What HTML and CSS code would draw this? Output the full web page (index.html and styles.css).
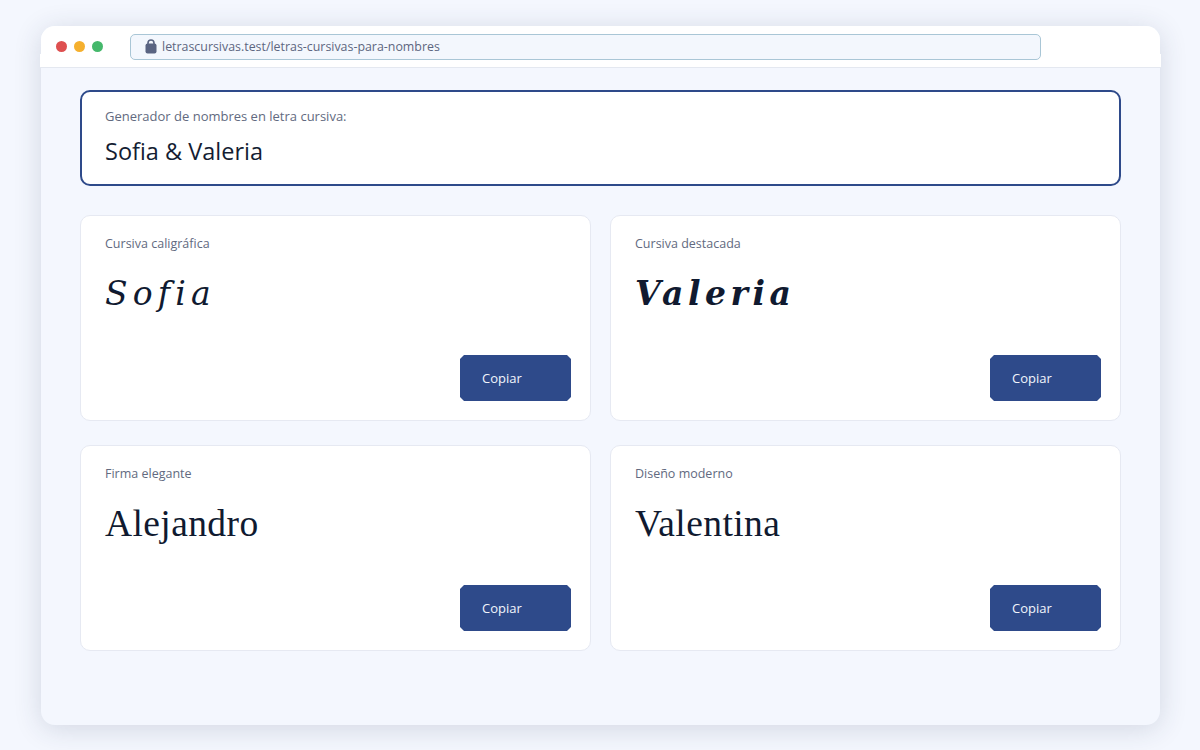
FILE: index.html
```html
<!DOCTYPE html>
<html lang="es">
<head>
    <meta charset="UTF-8">
    <meta name="viewport" content="width=device-width, initial-scale=1.0">
    <title>Letras cursivas para nombres</title>
    <link rel="stylesheet" href="styles.css">
</head>
<body>
    <div class="browser">
        <div class="browser-bar">
            <div class="dots">
                <span class="dot dot-red"></span>
                <span class="dot dot-yellow"></span>
                <span class="dot dot-green"></span>
            </div>
            <div class="address">
                <svg class="lock" width="12" height="15" viewBox="0 0 12 15">
                    <path d="M3 6V4a3 3 0 0 1 6 0v2" fill="none" stroke="#5a6482" stroke-width="1.6"/>
                    <rect x="0.5" y="4.5" width="11" height="10" rx="2" fill="#5a6482"/>
                </svg>
                <span>letrascursivas.test/letras-cursivas-para-nombres</span>
            </div>
        </div>

        <main class="content">
            <section class="name-input">
                <p class="label">Generador de nombres en letra cursiva:</p>
                <p class="typed">Sofia &amp; Valeria</p>
            </section>

            <section class="cards">
                <article class="card">
                    <p class="label-small">Cursiva caligráfica</p>
                    <p class="sample sample-script">Sofia</p>
                    <button class="copy">Copiar</button>
                </article>
                <article class="card">
                    <p class="label-small">Cursiva destacada</p>
                    <p class="sample sample-bold">Valeria</p>
                    <button class="copy">Copiar</button>
                </article>
                <article class="card">
                    <p class="label-small">Firma elegante</p>
                    <p class="sample sample-serif">Alejandro</p>
                    <button class="copy">Copiar</button>
                </article>
                <article class="card">
                    <p class="label-small">Diseño moderno</p>
                    <p class="sample sample-serif">Valentina</p>
                    <button class="copy">Copiar</button>
                </article>
            </section>
        </main>
    </div>
</body>
</html>
```

FILE: styles.css
```css
* { margin: 0; padding: 0; box-sizing: border-box; }
html, body { width: 100%; height: 100%; }
body {
    background: #f4f7fe;
    font-family: 'Open Sans', 'Noto Sans', sans-serif;
    color: #111b33;
    padding: 26px 40px 25px 41px;
    overflow: hidden;
}
.browser {
    width: 1119px;
    height: 699px;
    background: #f4f7fe;
    border-radius: 14px;
    box-shadow: 0 4px 28px rgba(40, 50, 80, 0.16);
}
.browser-bar {
    position: relative;
    height: 42px;
    background: #fff;
    border-radius: 14px 14px 0 0;
    display: flex;
    align-items: center;
    padding: 0 0 1px 15px;
}
/* lower part of the bar sticks out 1px past the window */
.browser-bar::before {
    content: "";
    position: absolute;
    left: -1px;
    right: -1px;
    bottom: 0;
    height: 13px;
    background: #fff;
    border-bottom: 1px solid #e4e8f0;
}
.dots { position: relative; display: flex; gap: 7px; width: 74px; }
.dot { width: 11px; height: 11px; border-radius: 50%; }
.dot-red { background: #de5050; }
.dot-yellow { background: #f5b02e; }
.dot-green { background: #45b86b; }
.address {
    position: relative;
    width: 911px;
    height: 26px;
    background: #f3f7fd;
    border: 1px solid #a9c6d6;
    border-radius: 5px;
    display: flex;
    align-items: center;
    gap: 5px;
    padding-left: 14px;
    font-size: 12.4px;
    color: #5d6680;
}
.lock { flex-shrink: 0; }
.content { padding: 22px 39px 0 39px; }
.name-input {
    height: 96px;
    background: #fff;
    border: 2px solid #2e4a8a;
    border-radius: 10px;
    padding: 15px 23px;
}
.label { font-size: 13px; line-height: 18px; color: #626a80; }
.typed { font-size: 23.5px; line-height: 32px; margin-top: 10px; color: #141d33; }
.cards {
    display: grid;
    grid-template-columns: 511px 511px;
    grid-auto-rows: 206px;
    column-gap: 19px;
    row-gap: 24px;
    margin-top: 29px;
}
.card {
    background: #fff;
    border: 1px solid #e6e9f2;
    border-radius: 10px;
    padding: 19px 19px 19px 24px;
    display: flex;
    flex-direction: column;
}
.label-small { font-size: 12.5px; line-height: 17px; color: #626a80; }
.sample {
    flex: 1;
    margin-top: 20px;
    color: #101a30;
    white-space: nowrap;
}
.sample-script {
    font-family: 'DejaVu Serif', serif;
    font-style: italic;
    font-size: 33px;
    line-height: 44px;
    letter-spacing: 5.2px;
}
.sample-bold {
    font-family: 'DejaVu Serif', serif;
    font-style: italic;
    font-weight: bold;
    font-size: 33px;
    line-height: 44px;
    letter-spacing: 4.5px;
}
.sample-serif {
    font-family: 'Liberation Serif', serif;
    font-size: 37.5px;
    line-height: 44px;
    letter-spacing: 0.4px;
}
.copy {
    align-self: flex-end;
    width: 111px;
    height: 46px;
    flex-shrink: 0;
    background: #2e4a8a;
    color: #f2f5fc;
    border: none;
    clip-path: polygon(4px 0, calc(100% - 4px) 0, 100% 4px, 100% calc(100% - 4px), calc(100% - 4px) 100%, 4px 100%, 0 calc(100% - 4px), 0 4px);
    font-family: inherit;
    font-size: 13px;
    text-align: left;
    padding-left: 22px;
    cursor: pointer;
}
```
